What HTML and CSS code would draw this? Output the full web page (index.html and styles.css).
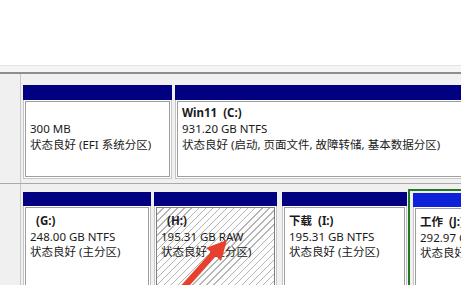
FILE: index.html
```html
<!DOCTYPE html>
<html>
<head>
<meta charset="utf-8">
<link rel="stylesheet" href="styles.css">
</head>
<body>
<div class="top"></div>
<div class="splitter"></div>
<div class="pane">
  <div class="disk disk-1">
    <div class="disk-label"></div>
    <div class="parts">
      <div class="part p-efi">
        <div class="bar"></div>
        <div class="body"><div class="inner">
          <div class="name"> </div>
          <div>300 MB</div>
          <div>状态良好 (EFI 系统分区)</div>
        </div></div>
      </div>
      <div class="part p-c">
        <div class="bar"></div>
        <div class="body"><div class="inner">
          <div class="name">Win11  (C:)</div>
          <div>931.20 GB NTFS</div>
          <div>状态良好 (启动, 页面文件, 故障转储, 基本数据分区)</div>
        </div></div>
      </div>
    </div>
  </div>
  <div class="disk disk-2">
    <div class="disk-label"></div>
    <div class="parts">
      <div class="part p-g">
        <div class="bar"></div>
        <div class="body"><div class="inner">
          <div class="name">  (G:)</div>
          <div>248.00 GB NTFS</div>
          <div>状态良好 (主分区)</div>
        </div></div>
      </div>
      <div class="part p-h">
        <div class="bar"></div>
        <div class="body"><div class="inner hatch">
          <div class="name">  (H:)</div>
          <div>195.31 GB RAW</div>
          <div>状态良好 (主分区)</div>
        </div></div>
      </div>
      <div class="part p-i">
        <div class="bar"></div>
        <div class="body"><div class="inner">
          <div class="name">下载  (I:)</div>
          <div>195.31 GB NTFS</div>
          <div>状态良好 (主分区)</div>
        </div></div>
      </div>
      <div class="ext">
        <div class="part p-j">
          <div class="bar"></div>
          <div class="body"><div class="inner">
            <div class="name">工作  (J:)</div>
            <div>292.97 GB NTFS</div>
            <div>状态良好 (逻辑驱动器)</div>
          </div></div>
        </div>
      </div>
    </div>
  </div>
</div>
<svg class="arrow" width="461" height="285" viewBox="0 0 461 285">
  <polygon points="227,240 221,261 216,256 182,294 177,290 211,252 206,248" fill="#e8402f"/>
</svg>
</body>
</html>
```
FILE: styles.css
```css
html, body {
  margin: 0;
  padding: 0;
}
body {
  width: 461px;
  height: 285px;
  overflow: hidden;
  position: relative;
  background: #fff;
  font-family: "Noto Sans", "Noto Sans CJK SC", sans-serif;
  font-size: 11.5px;
  color: #1a1a1a;
}
.top {
  height: 65px;
  background: #fff;
}
.splitter {
  height: 6px;
  background: #f5f5f5;
  border-top: 1px solid #e4e4e4;
  border-bottom: 2px solid #8e8e8e;
}
.pane {
  background: #f0f0f0;
  height: 211px;
}
.disk {
  display: flex;
}
.disk-1 {
  height: 109px;
  border-bottom: 1px solid #a9a9a9;
}
.disk-2 {
  height: 110px;
}
.disk-label {
  width: 20px;
  flex: none;
  border-right: 1px solid #c8c8c8;
  background: #f0f0f0;
}
.parts {
  display: flex;
  flex: 1;
  min-width: 0;
  padding-left: 2px;
  overflow: hidden;
}
.disk-1 .parts {
  padding-top: 11px;
  gap: 3px;
}
.disk-2 .parts {
  padding-top: 5px;
}
.part {
  display: flex;
  flex-direction: column;
  flex: none;
}
.disk-1 .part {
  height: 94px;
}
.disk-2 .part {
  margin-top: 3px;
  height: 120px;
}
.bar {
  height: 15px;
  background: #000080;
  flex: none;
}
.disk-2 .bar {
  height: 14px;
}
.body {
  flex: 1;
  background: #fff;
  border: 1px solid #c6c6c6;
  border-top: none;
  padding: 1px;
  display: flex;
}
.inner {
  flex: 1;
  border: 1px solid #9e9e9e;
  padding: 3px 4px;
  line-height: 16px;
  overflow: hidden;
}
.inner > div {
  white-space: pre;
}
.disk-2 .inner {
  padding-top: 5px;
  line-height: 15.5px;
}
.name {
  font-weight: bold;
  height: 16px;
}
.disk-2 .name {
  height: 15.5px;
}
.p-efi { width: 149px; }
.p-c { width: 300px; }
.p-g { width: 128px; }
.p-h { width: 123px; margin-left: 3px; }
.p-i { width: 125px; margin-left: 5px; }
.hatch {
  background: repeating-linear-gradient(135deg, #fdfdfd 0 4px, #b4b4b4 4px 5px);
  border-color: #7e7e7e;
}
.ext {
  flex: none;
  margin-left: 1px;
  border: 2px solid #1f7a23;
  border-right: none;
  padding: 2px 0 0 3px;
  width: 60px;
  height: 120px;
}
.p-j {
  margin-top: 0 !important;
  width: 100px;
}
.p-j .bar {
  background: #0d21d8;
}
.arrow {
  position: absolute;
  left: 0;
  top: 0;
  pointer-events: none;
}
```
